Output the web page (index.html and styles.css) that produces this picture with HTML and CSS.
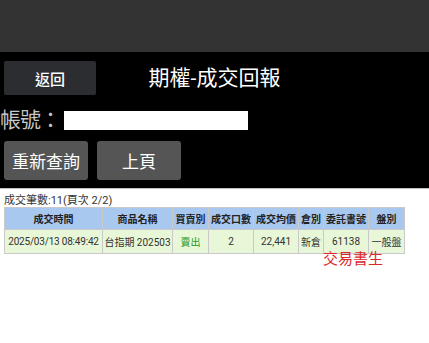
FILE: index.html
```html
<!DOCTYPE html>
<html>
<head>
<meta charset="utf-8">
<link rel="stylesheet" href="styles.css">
</head>
<body>
<div class="topbar"></div>
<div class="panel">
  <div class="header">
    <button class="back">返回</button>
    <div class="title">期權-成交回報</div>
    <div></div>
  </div>
  <div class="account">
    <span class="label">帳號：</span>
    <span class="input"></span>
  </div>
  <div class="actions">
    <button class="btn">重新查詢</button>
    <button class="btn">上頁</button>
  </div>
</div>
<div class="content">
  <div class="summary">成交筆數:11(頁次 2/2)</div>
  <table class="grid">
    <colgroup>
      <col class="c1"><col class="c2"><col class="c3"><col class="c4">
      <col class="c5"><col class="c6"><col class="c7"><col class="c8">
    </colgroup>
    <thead>
      <tr>
        <th>成交時間</th>
        <th>商品名稱</th>
        <th>買賣別</th>
        <th>成交口數</th>
        <th>成交均價</th>
        <th>倉別</th>
        <th>委託書號</th>
        <th>盤別</th>
      </tr>
    </thead>
    <tbody>
      <tr>
        <td class="time">2025/03/13 08:49:42</td>
        <td>台指期 202503</td>
        <td class="sell">賣出</td>
        <td>2</td>
        <td>22,441</td>
        <td>新倉</td>
        <td>61138</td>
        <td>一般盤</td>
      </tr>
    </tbody>
  </table>
  <div class="mark">交易書生</div>
</div>
</body>
</html>
```
FILE: styles.css
```css
html, body {
  margin: 0;
  padding: 0;
  background: #ffffff;
  font-family: Roboto, "Noto Sans CJK TC", sans-serif;
}
.topbar {
  height: 52px;
  background: #333333;
}
.panel {
  background: #000000;
  padding: 9px 0 8px 0;
  border-bottom: 1px solid #bdbdbd;
}
.header {
  display: grid;
  grid-template-columns: 1fr auto 1fr;
  align-items: center;
  height: 34px;
}
.back {
  justify-self: start;
  margin-left: 4px;
  width: 92px;
  height: 34px;
  border: none;
  border-radius: 2px;
  background: #2b2d31;
  color: #ffffff;
  font-family: Roboto, "Noto Sans CJK TC", sans-serif;
  font-size: 15px;
  font-weight: 500;
  padding: 0;
}
.title {
  color: #ffffff;
  font-size: 21px;
  line-height: 24px;
}
.account {
  display: flex;
  align-items: center;
  height: 24px;
  margin-top: 13px;
}
.label {
  color: #c8c8c8;
  font-size: 21px;
  line-height: 24px;
  width: 64px;
  letter-spacing: -1px;
}
.input {
  display: block;
  width: 184px;
  height: 19px;
  background: #ffffff;
}
.actions {
  display: flex;
  gap: 9px;
  margin-top: 9px;
  padding-left: 4px;
}
.btn {
  width: 84px;
  height: 39px;
  border: none;
  border-radius: 3px;
  background: #555555;
  color: #ffffff;
  font-family: Roboto, "Noto Sans CJK TC", sans-serif;
  font-size: 17px;
  padding: 0;
}
.content {
  padding: 5px 0 0 4px;
}
.summary {
  font-size: 11px;
  line-height: 13px;
  color: #333333;
}
.grid {
  border-collapse: collapse;
  table-layout: fixed;
  width: 400px;
  font-size: 10px;
  color: #333333;
}
.grid th, .grid td {
  border: 1px solid #c9c9c9;
  text-align: center;
  padding: 0;
  white-space: nowrap;
  overflow: hidden;
}
.grid th {
  background: #a9c8f0;
  height: 21px;
  font-weight: bold;
  color: #222222;
}
.grid td {
  background: #e7f7d8;
  height: 23px;
}
.grid td.time {
  letter-spacing: -0.2px;
}
.c1 { width: 98px; }
.c2 { width: 70px; }
.c3 { width: 36px; }
.c4 { width: 45px; }
.c5 { width: 45px; }
.c6 { width: 25px; }
.c7 { width: 45px; }
.c8 { width: 36px; }
.sell { color: #1f9a2a; }
.mark {
  margin-left: 319px;
  margin-top: -2px;
  color: #d8282a;
  font-size: 15px;
  line-height: 15px;
}
```
